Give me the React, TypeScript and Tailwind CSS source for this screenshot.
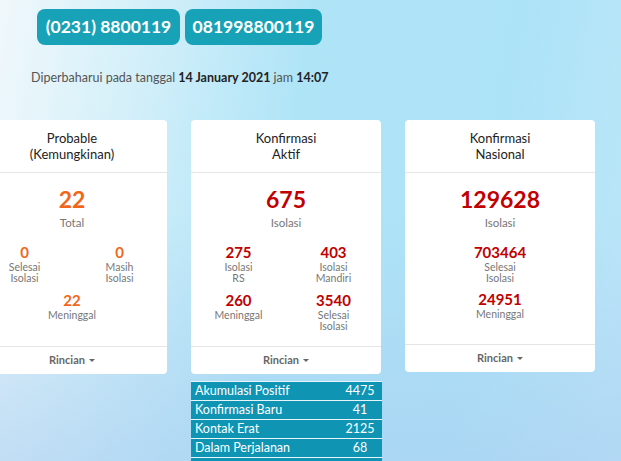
import React from "react";

const font = { fontFamily: "Lato, 'Noto Sans', sans-serif" };

function Stat({ value, label, color, big }: { value: string; label: React.ReactNode; color: string; big?: boolean }) {
  return (
    <div className="flex flex-col items-center">
      <div className={`${big ? "text-[23px] leading-[28px]" : "text-[15px] leading-[20px]"} font-bold ${color}`}>{value}</div>
      <div className={`${big ? "mt-[3px] text-[11.5px] leading-[14px]" : "text-[10.5px] leading-[11px]"} text-[#777] text-center`}>{label}</div>
    </div>
  );
}

function Card({ title, children }: { title: React.ReactNode; children: React.ReactNode }) {
  return (
    <div className="w-[190px] shrink-0 bg-white rounded-[4px] flex flex-col">
      <div className="h-[53px] flex flex-col items-center justify-center border-b border-[#e5e5e5] text-[13px] leading-[16px] text-[#222] text-center">
        {title}
      </div>
      {children}
      <div className="h-[28px] border-t border-[#e5e5e5] flex items-center justify-center text-[11px] font-bold text-[#666]">
        Rincian
        <span className="ml-[4px] inline-block w-0 h-0 border-l-[3px] border-r-[3px] border-t-[3px] border-l-transparent border-r-transparent border-t-[#666]" />
      </div>
    </div>
  );
}

const rows: [string, string][] = [
  ["Akumulasi Positif", "4475"],
  ["Konfirmasi Baru", "41"],
  ["Kontak Erat", "2125"],
  ["Dalam Perjalanan", "68"],
  ["", ""],
];

export default function App() {
  return (
    <div
      style={font}
      className="w-[621px] h-[461px] overflow-hidden relative bg-[linear-gradient(180deg,rgba(0,0,0,0)_45%,rgba(168,204,240,0.55)_100%),linear-gradient(100deg,#f0f8fb_0%,#d2eff9_22%,#afe4f7_45%,#ade3f7_75%,#bde6f9_100%)]"
    >
      <div className="flex gap-[5px] pl-[37px] pt-[9px]">
        <div className="h-[36px] w-[143px] rounded-[8px] bg-[#18a2b7] text-white font-bold text-[17.5px] flex items-center justify-center">
          (0231) 8800119
        </div>
        <div className="h-[36px] w-[137px] rounded-[8px] bg-[#18a2b7] text-white font-bold text-[17.5px] flex items-center justify-center">
          081998800119
        </div>
      </div>
      <div className="pl-[31px] mt-[25px] text-[12.5px] leading-[16px] text-[#555]">
        Diperbaharui pada tanggal <b className="text-[#222]">14 January 2021</b> jam <b className="text-[#222]">14:07</b>
      </div>
      <div className="flex gap-[24px] ml-[-23px] mt-[34px] items-start">
        <Card title={<><span>Probable</span><span>(Kemungkinan)</span></>}>
          <div className="h-[173px] pt-[12px] flex flex-col">
            <Stat big value="22" label="Total" color="text-[#f0671b]" />
            <div className="grid grid-cols-2 mt-[12px]">
              <Stat value="0" label={<>Selesai<br />Isolasi</>} color="text-[#f0671b]" />
              <Stat value="0" label={<>Masih<br />Isolasi</>} color="text-[#f0671b]" />
            </div>
            <div className="mt-[6px]">
              <Stat value="22" label="Meninggal" color="text-[#f0671b]" />
            </div>
          </div>
        </Card>
        <Card title={<><span>Konfirmasi</span><span>Aktif</span></>}>
          <div className="h-[173px] pt-[12px] flex flex-col">
            <Stat big value="675" label="Isolasi" color="text-[#c00000]" />
            <div className="grid grid-cols-2 mt-[12px] gap-y-[6px]">
              <Stat value="275" label={<>Isolasi<br />RS</>} color="text-[#c00000]" />
              <Stat value="403" label={<>Isolasi<br />Mandiri</>} color="text-[#c00000]" />
              <Stat value="260" label="Meninggal" color="text-[#c00000]" />
              <Stat value="3540" label={<>Selesai<br />Isolasi</>} color="text-[#c00000]" />
            </div>
          </div>
        </Card>
        <Card title={<><span>Konfirmasi</span><span>Nasional</span></>}>
          <div className="h-[171px] pt-[12px] flex flex-col">
            <Stat big value="129628" label="Isolasi" color="text-[#c00000]" />
            <div className="mt-[12px]">
              <Stat value="703464" label={<>Selesai<br />Isolasi</>} color="text-[#c00000]" />
            </div>
            <div className="mt-[5px]">
              <Stat value="24951" label="Meninggal" color="text-[#c00000]" />
            </div>
          </div>
        </Card>
      </div>
      <div className="absolute left-[191px] top-[381px] w-[191px] bg-[#0f94b4] border-t border-[#e8f4f8]">
        {rows.map(([k, v], i) => (
          <div key={i} className="h-[19px] border-b border-[#e8f4f8] flex items-center text-white text-[12.5px]">
            <div className="flex-1 pl-[4px]">{k}</div>
            <div className="w-[44px] text-center">{v}</div>
          </div>
        ))}
      </div>
    </div>
  );
}
